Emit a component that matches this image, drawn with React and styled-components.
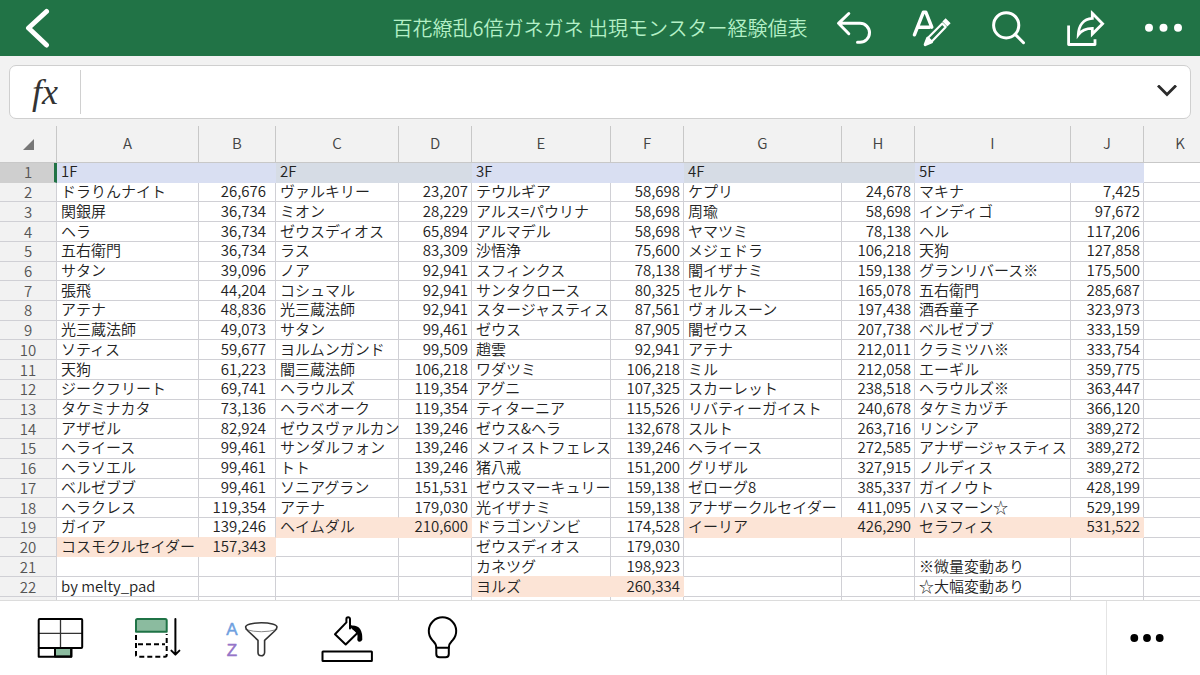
import React from "react";
import styled, { createGlobalStyle, css } from "styled-components";

const floors = [
  {
    title: "1F",
    rows: [
      ["ドラりんナイト", "26,676"],
      ["関銀屏", "36,734"],
      ["ヘラ", "36,734"],
      ["五右衛門", "36,734"],
      ["サタン", "39,096"],
      ["張飛", "44,204"],
      ["アテナ", "48,836"],
      ["光三蔵法師", "49,073"],
      ["ソティス", "59,677"],
      ["天狗", "61,223"],
      ["ジークフリート", "69,741"],
      ["タケミナカタ", "73,136"],
      ["アザゼル", "82,924"],
      ["ヘライース", "99,461"],
      ["ヘラソエル", "99,461"],
      ["ベルゼブブ", "99,461"],
      ["ヘラクレス", "119,354"],
      ["ガイア", "139,246"],
      ["コスモクルセイダー", "157,343"],
      ["", ""],
      ["by melty_pad", ""],
    ],
  },
  {
    title: "2F",
    rows: [
      ["ヴァルキリー", "23,207"],
      ["ミオン", "28,229"],
      ["ゼウスディオス", "65,894"],
      ["ラス", "83,309"],
      ["ノア", "92,941"],
      ["コシュマル", "92,941"],
      ["光三蔵法師", "92,941"],
      ["サタン", "99,461"],
      ["ヨルムンガンド", "99,509"],
      ["闇三蔵法師", "106,218"],
      ["ヘラウルズ", "119,354"],
      ["ヘラベオーク", "119,354"],
      ["ゼウスヴァルカン", "139,246"],
      ["サンダルフォン", "139,246"],
      ["トト", "139,246"],
      ["ソニアグラン", "151,531"],
      ["アテナ", "179,030"],
      ["ヘイムダル", "210,600"],
    ],
  },
  {
    title: "3F",
    rows: [
      ["テウルギア", "58,698"],
      ["アルス=パウリナ", "58,698"],
      ["アルマデル", "58,698"],
      ["沙悟浄", "75,600"],
      ["スフィンクス", "78,138"],
      ["サンタクロース", "80,325"],
      ["スタージャスティス", "87,561"],
      ["ゼウス", "87,905"],
      ["趙雲", "92,941"],
      ["ワダツミ", "106,218"],
      ["アグニ", "107,325"],
      ["ティターニア", "115,526"],
      ["ゼウス&ヘラ", "132,678"],
      ["メフィストフェレス", "139,246"],
      ["猪八戒", "151,200"],
      ["ゼウスマーキュリー", "159,138"],
      ["光イザナミ", "159,138"],
      ["ドラゴンゾンビ", "174,528"],
      ["ゼウスディオス", "179,030"],
      ["カネツグ", "198,923"],
      ["ヨルズ", "260,334"],
    ],
  },
  {
    title: "4F",
    rows: [
      ["ケプリ", "24,678"],
      ["周瑜", "58,698"],
      ["ヤマツミ", "78,138"],
      ["メジェドラ", "106,218"],
      ["闇イザナミ", "159,138"],
      ["セルケト", "165,078"],
      ["ヴォルスーン", "197,438"],
      ["闇ゼウス", "207,738"],
      ["アテナ", "212,011"],
      ["ミル", "212,058"],
      ["スカーレット", "238,518"],
      ["リバティーガイスト", "240,678"],
      ["スルト", "263,716"],
      ["ヘライース", "272,585"],
      ["グリザル", "327,915"],
      ["ゼローグ8", "385,337"],
      ["アナザークルセイダー", "411,095"],
      ["イーリア", "426,290"],
    ],
  },
  {
    title: "5F",
    rows: [
      ["マキナ", "7,425"],
      ["インディゴ", "97,672"],
      ["ヘル", "117,206"],
      ["天狗", "127,858"],
      ["グランリバース※", "175,500"],
      ["五右衛門", "285,687"],
      ["酒呑童子", "323,973"],
      ["ベルゼブブ", "333,159"],
      ["クラミツハ※", "333,754"],
      ["エーギル", "359,775"],
      ["ヘラウルズ※", "363,447"],
      ["タケミカヅチ", "366,120"],
      ["リンシア", "389,272"],
      ["アナザージャスティス", "389,272"],
      ["ノルディス", "389,272"],
      ["ガイノウト", "428,199"],
      ["ハヌマーン☆", "529,199"],
      ["セラフィス", "531,522"],
      ["", ""],
      ["※微量変動あり", ""],
      ["☆大幅変動あり", ""],
    ],
  },
];

// last monster of each floor is highlighted
const bossRow = [20, 19, 22, 19, 19];

const columns = [
  ["A", 142],
  ["B", 77],
  ["C", 123],
  ["D", 73],
  ["E", 139],
  ["F", 73],
  ["G", 158],
  ["H", 73],
  ["I", 156],
  ["J", 73],
];

const rowNumbers = Array.from({ length: 22 }, (_, i) => i + 1);

const BLUE = "#d9dff2";
const GRAY = "#d6dce5";
const PEACH = "#fce4d6";
const LINE = "#d0d0d5";

const getFill = (floor, row) => {
  if (row === 1) return floor % 2 ? GRAY : BLUE;
  if (row === bossRow[floor]) return PEACH;
  return null;
};

const App = () => {
  return (
    <Container>
      <GlobalStyle />
      <TopBar>
        <div>
          <TopButton aria-label="戻る">
            <TopIcon viewBox="0 0 40 40" $stroke={5}>
              <path d="M27.5 3.500 9.500 20l18 17" />
            </TopIcon>
          </TopButton>
        </div>
        <Title>百花繚乱6倍ガネガネ 出現モンスター経験値表</Title>
        <TopActions>
          <TopButton aria-label="元に戻す">
            <TopIcon viewBox="0 0 40 40">
              <path d="M14.800 5.500 4.500 15.300l10.300 10.400M4.800 15.300H26a9.500 9.500 0 0 1 0 19h-2.500" />
            </TopIcon>
          </TopButton>
          <TopButton aria-label="書式">
            <TopIcon viewBox="0 0 40 40">
              <path
                d="M3.400 26.800 12.400 4.200h2.400l6 15M6.500 19.200h12"
                strokeWidth="3.400"
              />
              <path
                d="M14.500 36.300l2.600-6.600L31.300 15.500l3.400 3.400-14.200 14.800z"
                strokeWidth="2.200"
              />
              <path d="M14.200 36.600l2.400-6.400 4 3.600z" fill="#fff" />
              <path
                d="M33 11.800l5 5"
                strokeWidth="4.600"
                strokeLinecap="butt"
              />
            </TopIcon>
          </TopButton>
          <TopButton aria-label="検索">
            <TopIcon viewBox="0 0 40 40">
              <circle cx="18.200" cy="17.300" r="12.600" />
              <path d="M27.200 26.400l8.300 8.300" />
            </TopIcon>
          </TopButton>
          <TopButton aria-label="共有">
            <TopIcon viewBox="0 0 40 40" $stroke={2.8}>
              <path
                d="M3.600 17.500V36.500h26.400v-5.200"
                strokeLinecap="butt"
              />
              <path
                d="M27.300 5.300 37.600 15.700 27.300 26v-5.600c-6.600 0-10.800 2-14 6.400.4-9.400 5-15.800 14-16.400z"
                strokeLinejoin="miter"
              />
            </TopIcon>
          </TopButton>
          <TopButton aria-label="その他">
            <TopIcon viewBox="0 0 40 40" $solid>
              <circle cx="7" cy="19.800" r="4" />
              <circle cx="21.500" cy="19.800" r="4" />
              <circle cx="36" cy="19.800" r="4" />
            </TopIcon>
          </TopButton>
        </TopActions>
      </TopBar>

      <FormulaArea>
        <FormulaBox>
          <FxButton aria-label="関数の挿入">fx</FxButton>
          <FormulaInput type="text" aria-label="数式バー" />
          <ExpandButton aria-label="数式バーを展開">
            <svg width="22" height="14" viewBox="0 0 22 14">
              <path
                d="M2 0.500l9 9 9-9"
                fill="none"
                stroke="#2b2b2b"
                strokeWidth="2.800"
              />
            </svg>
          </ExpandButton>
        </FormulaBox>
      </FormulaArea>

      <SheetArea>
        <Sheet>
          <colgroup>
            <Col $width={57} />
            {columns.map(([name, width]) => (
              <Col key={name} $width={width} />
            ))}
            <col />
          </colgroup>
          <thead>
            <tr>
              <ColumnHead aria-label="すべて選択">
                <svg width="11" height="11" viewBox="0 0 11 11">
                  <path d="M11 0v11H0z" fill="#777" />
                </svg>
              </ColumnHead>
              {columns.map(([name]) => (
                <ColumnHead key={name} scope="col">
                  {name}
                </ColumnHead>
              ))}
              <ColumnHead scope="col">K</ColumnHead>
            </tr>
          </thead>
          <tbody>
            {rowNumbers.map((row) => (
              <tr key={row}>
                <RowHead scope="row" $selected={row === 1}>
                  {row}
                </RowHead>
                {floors.map((floor, i) => {
                  const [name, exp] =
                    row === 1 ? [floor.title, ""] : floor.rows[row - 2] || [];
                  const fill = getFill(i, row);
                  const below = getFill(i, row + 1);
                  return (
                    <React.Fragment key={floor.title}>
                      <Cell $fill={fill} $below={below}>
                        {name}
                      </Cell>
                      <Cell $fill={fill} $below={below} $number $inset={i === 0}>
                        {exp}
                      </Cell>
                    </React.Fragment>
                  );
                })}
                <Cell />
              </tr>
            ))}
            {/* top edge of the next row */}
            <CutRow>
              <RowHead />
              {floors.map((floor) => (
                <React.Fragment key={floor.title}>
                  <Cell />
                  <Cell />
                </React.Fragment>
              ))}
              <Cell />
            </CutRow>
          </tbody>
        </Sheet>
      </SheetArea>

      <BottomBar>
        <Tools>
          <ToolButton aria-label="シート">
            <ToolIcon viewBox="0 0 56 56">
              <path d="M24 38h16.300v8.500H24z" fill="#8bbb9f" />
              <path
                d="M29.500 9v29M8 23.400h43"
                stroke="#333"
                strokeWidth="1.300"
              />
              <rect x="7.700" y="9" width="43.500" height="29" rx="1" />
              <path d="M7.700 38v8.700h32.600V38M24 38v8.700" />
            </ToolIcon>
          </ToolButton>
          <ToolButton aria-label="下へ移動">
            <ToolIcon viewBox="0 0 56 56">
              <path
                d="M9 21.700V10.500q0-1.500 1.500-1.500h27.700q1.500 0 1.500 1.500v11.200z"
                fill="#8bbb9f"
                stroke="#1f7346"
              />
              <path
                d="M9 25v20q0 1.700 1.700 1.700h27.300q1.700 0 1.700-1.700V24M11 34.300h27"
                strokeDasharray="5 3"
                strokeLinecap="butt"
              />
              <path d="M48.400 9v35M44.400 40.600l4 4 4-4" />
            </ToolIcon>
          </ToolButton>
          <ToolButton aria-label="並べ替えとフィルター">
            <ToolIcon viewBox="0 0 56 56">
              <Letter x="9" y="25" $color="#6f9fdf">
                A
              </Letter>
              <Letter x="9" y="46" $color="#9575c8">
                Z
              </Letter>
              <path
                d="M22.800 19.600q15.500 4.400 31 0"
                stroke="#888"
                strokeWidth="1"
              />
              <path
                d="M22.600 17c0-2.400 7-4.200 15.700-4.200S54 14.600 54 17c0 1.600-1 2.700-2.300 4L41.600 30.300V42.500a3.300 3.300 0 0 1-6.600 0V30.300L25 21c-1.400-1.300-2.400-2.400-2.400-4z"
                stroke="#333"
                strokeWidth="1.600"
              />
            </ToolIcon>
          </ToolButton>
          <ToolButton aria-label="塗りつぶしの色">
            <ToolIcon viewBox="0 0 56 56">
              <rect x="3.500" y="41.500" width="49.400" height="9.500" rx=".5" />
              <path d="M31 18.500V9a1.800 1.800 0 0 0-3.600 0v3.400L16 24.200l10.700 10.300 12-11.800-7.700-7.400" />
              <path
                d="M33.500 16.500c6.500 0 9 4.500 8.800 13-1 1.800-2.400 1.400-3 .2.800-4.700.4-8.300-5.800-11.600z"
                fill="#000"
              />
            </ToolIcon>
          </ToolButton>
          <ToolButton aria-label="アイデア">
            <ToolIcon viewBox="0 0 56 56">
              <path d="M21.300 37.700c0-4-1.300-4.800-4-7.500a13.700 13.700 0 1 1 20.400 0c-2.600 2.700-3.900 3.500-3.900 7.500z" />
              <path d="M21.300 37.700v6.300q0 3.300 3.300 3.300h5.900q3.300 0 3.300-3.300v-6.300" />
            </ToolIcon>
          </ToolButton>
        </Tools>
        <MoreButton aria-label="その他のコマンド">
          <svg width="40" height="10" viewBox="0 0 40 10">
            <circle cx="7.300" cy="5" r="3.900" />
            <circle cx="20" cy="5" r="3.900" />
            <circle cx="32.700" cy="5" r="3.900" />
          </svg>
        </MoreButton>
      </BottomBar>
    </Container>
  );
};

const GlobalStyle = createGlobalStyle`
  * {
    box-sizing: border-box;
  }
  body {
    margin: 0;
    font-family: "Noto Sans CJK JP", sans-serif;
    font-weight: 350;
  }
  button {
    padding: 0;
    border: 0;
    background: none;
    cursor: pointer;
  }
  svg {
    display: block;
  }
`;

const Container = styled.div`
  display: flex;
  flex-direction: column;
  height: 100vh;
  background-color: #f2f2f2;
`;

const TopBar = styled.header`
  display: grid;
  grid-template-columns: 1fr auto 1fr;
  align-items: center;
  flex: none;
  height: 56px;
  background-color: #217346;
`;

const Title = styled.h1`
  margin: 0;
  font-size: 20px;
  font-weight: 350;
  line-height: 28px;
  white-space: nowrap;
  color: #b4f0c6;
`;

const TopActions = styled.div`
  display: flex;
  justify-content: flex-end;
`;

const TopButton = styled.button`
  display: flex;
  align-items: center;
  justify-content: center;
  width: 77px;
  height: 56px;
`;

const TopIcon = styled.svg`
  width: 40px;
  height: 40px;
  fill: ${(props) => (props.$solid ? "#fff" : "none")};
  stroke: ${(props) => (props.$solid ? "none" : "#fff")};
  stroke-width: ${(props) => props.$stroke || 3};
  stroke-linecap: round;
  stroke-linejoin: round;
`;

const FormulaArea = styled.div`
  flex: none;
  padding: 9px 9px 7px;
`;

const FormulaBox = styled.div`
  display: flex;
  align-items: center;
  height: 54px;
  border: 1px solid #cfcfcf;
  border-radius: 7px;
  background-color: #fff;
`;

const FxButton = styled.button`
  width: 71px;
  height: 44px;
  border-right: 1px solid #d0d0d0;
  font-family: "Liberation Serif", serif;
  font-size: 36px;
  font-style: italic;
  line-height: 40px;
  color: #333;
`;

const FormulaInput = styled.input`
  flex: 1;
  min-width: 0;
  height: 44px;
  padding: 0 12px;
  border: 0;
  outline: none;
  background: none;
  font: inherit;
`;

const ExpandButton = styled.button`
  display: flex;
  align-items: center;
  justify-content: center;
  width: 46px;
  height: 44px;
`;

const SheetArea = styled.main`
  flex: 1;
  min-height: 0;
  overflow: hidden;
`;

const Sheet = styled.table`
  width: 100%;
  min-width: 1217px;
  height: 100%;
  table-layout: fixed;
  border-collapse: separate;
  border-spacing: 0;
  background-color: #fff;
`;

const Col = styled.col`
  width: ${(props) => props.$width}px;
`;

const ColumnHead = styled.th`
  height: 37px;
  padding: 0 0 2px;
  border-right: 1px solid #c8c8c8;
  border-bottom: 1px solid #c8c8c8;
  background-color: #f2f2f2;
  font-size: 15px;
  font-weight: 350;
  line-height: 18px;
  color: #444;
  svg {
    margin: 2px auto 0;
  }
`;

const RowHead = styled.th`
  padding: 0 0 1px;
  border-right: 1px solid ${LINE};
  border-bottom: 1px solid ${LINE};
  background-color: #f2f2f2;
  font-size: 15px;
  font-weight: 350;
  line-height: 17px;
  color: #555;
  ${(props) =>
    props.$selected &&
    css`
      padding-left: 2px;
      border-right: 3px solid #217346;
      border-bottom-color: #cfcfcf;
      background-color: #cfcfcf;
    `}
`;

const Cell = styled.td`
  padding: 0 3px 2px 4px;
  border-right: 1px solid ${(props) => props.$fill || LINE};
  border-bottom: 1px solid ${(props) => props.$fill || props.$below || LINE};
  background-color: ${(props) => props.$fill || "#fff"};
  font-size: 15px;
  line-height: 16px;
  text-align: ${(props) => (props.$number ? "right" : "left")};
  white-space: nowrap;
  color: #222;
  ${(props) =>
    props.$inset &&
    css`
      padding-right: 9px;
    `}
`;

const CutRow = styled.tr`
  height: 3px;
  td,
  th {
    height: 3px;
    border-bottom: 0;
  }
`;

const BottomBar = styled.footer`
  display: flex;
  justify-content: space-between;
  flex: none;
  height: 75px;
  border-top: 1px solid #dcdcdc;
  background-color: #fff;
`;

const Tools = styled.div`
  display: flex;
  padding-left: 11px;
`;

const ToolButton = styled.button`
  display: flex;
  align-items: center;
  justify-content: center;
  width: 96px;
`;

const ToolIcon = styled.svg`
  width: 56px;
  height: 56px;
  fill: none;
  stroke: #000;
  stroke-width: 2;
  stroke-linecap: round;
  stroke-linejoin: round;
`;

const Letter = styled.text`
  fill: ${(props) => props.$color};
  stroke: ${(props) => props.$color};
  stroke-width: 0.5;
  font-family: "Liberation Sans", sans-serif;
  font-size: 17px;
  font-weight: 400;
  text-anchor: middle;
`;

const MoreButton = styled.button`
  && {
    display: flex;
    align-items: center;
    justify-content: center;
    width: 94px;
    padding-right: 14px;
    border-left: 1px solid #e4e4e4;
  }
`;

export default App;
